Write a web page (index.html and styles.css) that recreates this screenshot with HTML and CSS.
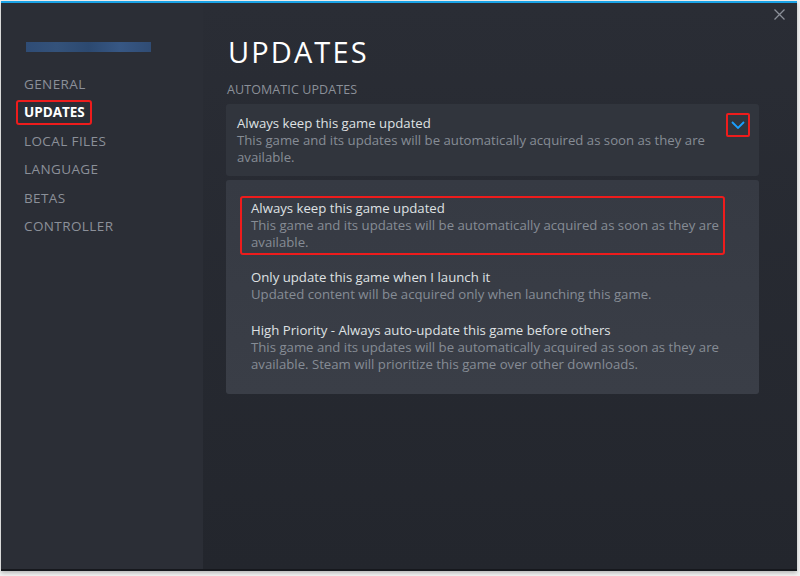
FILE: index.html
```html
<!DOCTYPE html>
<html>
<head>
<meta charset="utf-8">
<link rel="stylesheet" href="styles.css">
</head>
<body>
<div class="window">
  <aside class="sidebar">
    <div class="game-name"></div>
    <nav class="nav">
      <div class="nav-item">GENERAL</div>
      <div class="nav-item active"><span class="hl">UPDATES</span></div>
      <div class="nav-item">LOCAL FILES</div>
      <div class="nav-item">LANGUAGE</div>
      <div class="nav-item">BETAS</div>
      <div class="nav-item">CONTROLLER</div>
    </nav>
  </aside>
  <main class="main">
    <div class="close">
      <svg width="11" height="11" viewBox="0 0 11 11"><path d="M0.5 0.5L10.5 10.5M10.5 0.5L0.5 10.5" stroke="#8a8f98" stroke-width="1.3" fill="none"/></svg>
    </div>
    <h1 class="title">UPDATES</h1>
    <div class="section-label">AUTOMATIC UPDATES</div>
    <div class="select">
      <div class="opt-text">
        <div class="opt-title">Always keep this game updated</div>
        <div class="opt-desc">This game and its updates will be automatically acquired as soon as they are available.</div>
      </div>
      <div class="chevron">
        <svg width="14" height="8" viewBox="0 0 14 8"><path d="M1 1L7 7L13 1" stroke="#1a9fff" stroke-width="1.8" fill="none"/></svg>
      </div>
    </div>
    <div class="menu">
      <div class="menu-item selected">
        <div class="opt-title">Always keep this game updated</div>
        <div class="opt-desc">This game and its updates will be automatically acquired as soon as they are available.</div>
      </div>
      <div class="menu-item">
        <div class="opt-title">Only update this game when I launch it</div>
        <div class="opt-desc">Updated content will be acquired only when launching this game.</div>
      </div>
      <div class="menu-item">
        <div class="opt-title">High Priority - Always auto-update this game before others</div>
        <div class="opt-desc">This game and its updates will be automatically acquired as soon as they are available. Steam will prioritize this game over other downloads.</div>
      </div>
    </div>
  </main>
</div>
</body>
</html>
```

FILE: styles.css
```css
html, body {
  margin: 0;
  padding: 0;
}
body {
  background: #f3f3f3;
  width: 800px;
  height: 576px;
  font-family: "Open Sans", "Noto Sans", sans-serif;
}
.window {
  margin: 1px 0 0 1px;
  width: 796px;
  height: 566px;
  border-top: 2px solid #1ba3e6;
  border-bottom: 2px solid #16181d;
  display: flex;
  box-shadow: 0 2px 4px rgba(0,0,0,0.25);
}
.sidebar {
  width: 202px;
  background: #2b2e36;
  box-sizing: border-box;
  padding: 39px 0 0 0;
}
.game-name {
  margin-left: 25px;
  width: 125px;
  height: 10px;
  background: linear-gradient(90deg, #2f4c75 0%, #34527a 25%, #2c4970 50%, #375784 75%, #304c74 100%);
}
.nav {
  margin-top: 18px;
  display: flex;
  flex-direction: column;
}
.nav-item {
  height: 28.4px;
  line-height: 28.4px;
  padding-left: 23px;
  font-size: 13.5px;
  letter-spacing: 0.4px;
  color: #8b9099;
}
.nav-item.active {
  color: #ffffff;
  font-weight: 700;
  padding-left: 15px;
  letter-spacing: 0;
}
.hl {
  display: inline-block;
  border: 2px solid #ee1c1c;
  border-radius: 3px;
  padding: 0 5px 0 6px;
  line-height: 21px;
}
.main {
  flex: 1;
  position: relative;
  background: linear-gradient(180deg, #2a2d35 0%, #23262d 100%);
  padding: 0 38px 0 23px;
}
.close {
  position: absolute;
  right: 12px;
  top: 6px;
  display: flex;
}
.title {
  margin: 32px 0 0 2px;
  font-size: 29px;
  font-weight: 400;
  letter-spacing: 2.1px;
  color: #ffffff;
  line-height: 34px;
}
.section-label {
  margin: 12px 0 0 1px;
  font-size: 12.5px;
  color: #8b9099;
  letter-spacing: 0.1px;
}
.select {
  margin-top: 6px;
  background: #31353d;
  border-radius: 3px;
  display: flex;
  padding: 11px 9px 10px 11px;
  height: 51px;
}
.opt-text {
  flex: 1;
}
.opt-title {
  font-size: 13.2px;
  color: #dfe1e3;
  line-height: 17px;
}
.opt-desc {
  font-size: 13.2px;
  color: #868c95;
  line-height: 17px;
}
.chevron {
  width: 20px;
  height: 20px;
  border: 2px solid #ee1c1c;
  border-radius: 2px;
  display: flex;
  align-items: center;
  justify-content: center;
  margin-top: -2px;
}
.menu {
  margin-top: 4px;
  background: linear-gradient(180deg, #363a43 0%, #3a3e47 100%);
  border-radius: 3px;
  padding: 16px 34px 17px 14px;
}
.menu-item {
  padding: 2px 0 2px 9px;
  border: 2px solid transparent;
  margin-bottom: 11px;
}
.menu-item:last-child {
  margin-bottom: 0;
}
.menu-item.selected {
  border-color: #ee1c1c;
  border-radius: 3px;
  margin-bottom: 10px;
}
```
